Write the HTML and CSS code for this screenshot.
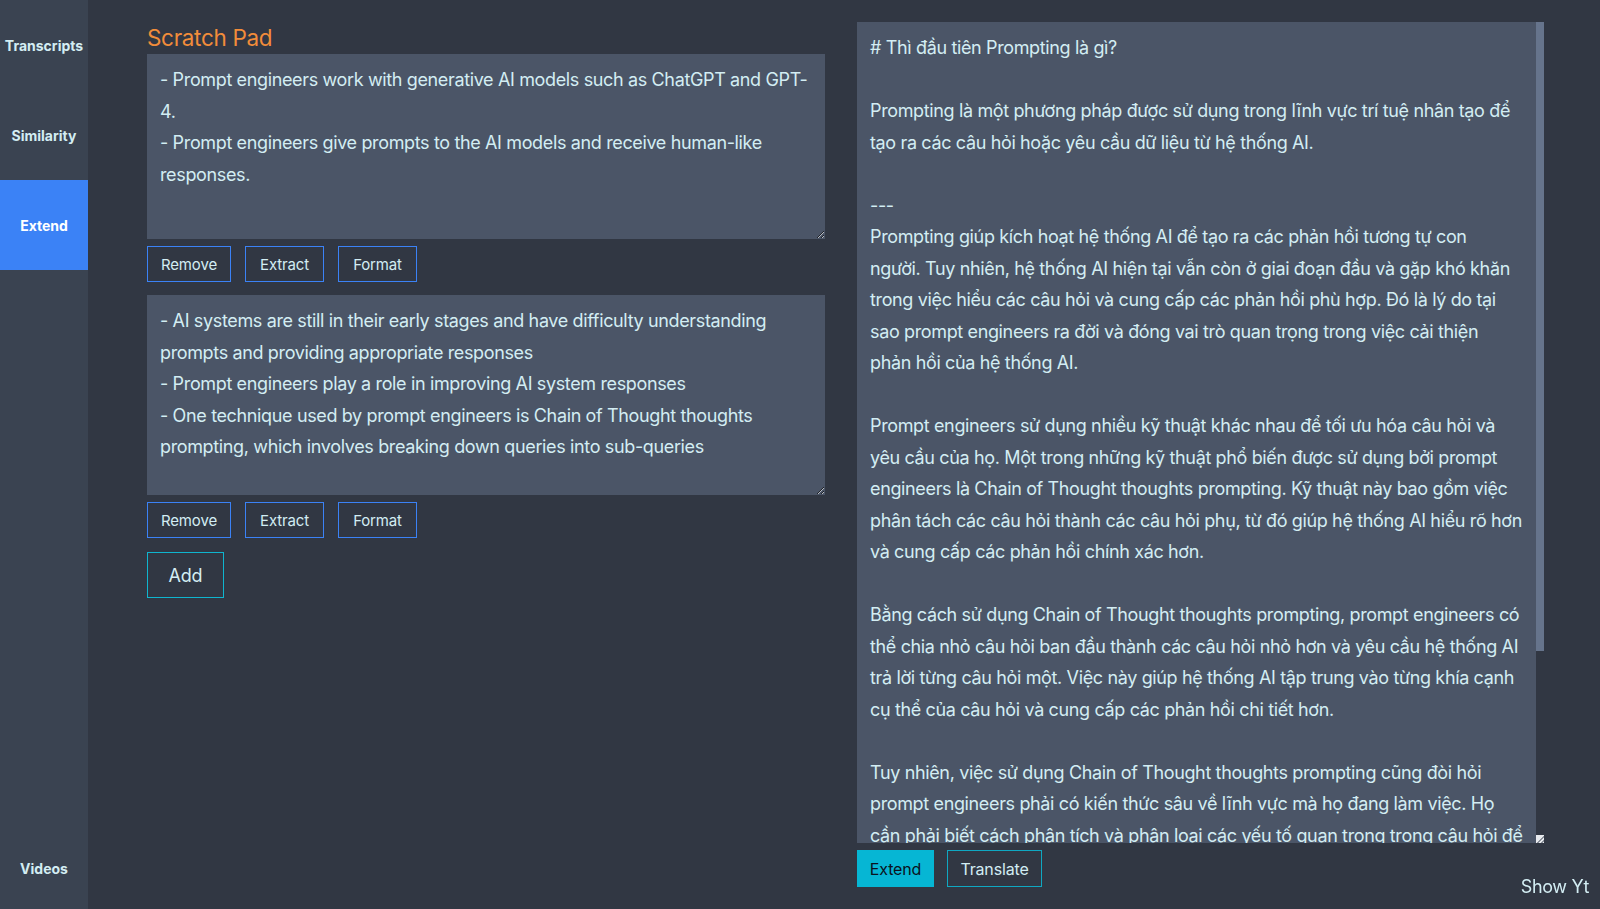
FILE: index.html
```html
<!DOCTYPE html>
<html lang="vi">
<head>
<meta charset="utf-8">
<title>Scratch Pad</title>
<link rel="stylesheet" href="styles.css">
</head>
<body>
<div class="app">
  <nav class="sidebar">
    <div class="nav-item">Transcripts</div>
    <div class="nav-item">Similarity</div>
    <div class="nav-item active">Extend</div>
    <div class="nav-spacer"></div>
    <div class="nav-item nav-bottom">Videos</div>
  </nav>
  <main class="main">
    <section class="pad">
      <h1 class="pad-title">Scratch Pad</h1>
      <textarea class="note note-1" spellcheck="false">- Prompt engineers work with generative AI models such as ChatGPT and GPT-
4.
- Prompt engineers give prompts to the AI models and receive human-like
responses.</textarea>
      <div class="btn-row">
        <button class="btn btn-remove">Remove</button>
        <button class="btn btn-extract">Extract</button>
        <button class="btn btn-format">Format</button>
      </div>
      <textarea class="note note-2" spellcheck="false">- AI systems are still in their early stages and have difficulty understanding
prompts and providing appropriate responses
- Prompt engineers play a role in improving AI system responses
- One technique used by prompt engineers is Chain of Thought thoughts
prompting, which involves breaking down queries into sub-queries</textarea>
      <div class="btn-row">
        <button class="btn btn-remove">Remove</button>
        <button class="btn btn-extract">Extract</button>
        <button class="btn btn-format">Format</button>
      </div>
      <button class="btn btn-add">Add</button>
    </section>
    <section class="output">
      <div class="result-box">
        <textarea class="result" spellcheck="false"># Thì đầu tiên Prompting là gì?

Prompting là một phương pháp được sử dụng trong lĩnh vực trí tuệ nhân tạo để
tạo ra các câu hỏi hoặc yêu cầu dữ liệu từ hệ thống AI.

---
Prompting giúp kích hoạt hệ thống AI để tạo ra các phản hồi tương tự con
người. Tuy nhiên, hệ thống AI hiện tại vẫn còn ở giai đoạn đầu và gặp khó khăn
trong việc hiểu các câu hỏi và cung cấp các phản hồi phù hợp. Đó là lý do tại
sao prompt engineers ra đời và đóng vai trò quan trọng trong việc cải thiện
phản hồi của hệ thống AI.

Prompt engineers sử dụng nhiều kỹ thuật khác nhau để tối ưu hóa câu hỏi và
yêu cầu của họ. Một trong những kỹ thuật phổ biến được sử dụng bởi prompt
engineers là Chain of Thought thoughts prompting. Kỹ thuật này bao gồm việc
phân tách các câu hỏi thành các câu hỏi phụ, từ đó giúp hệ thống AI hiểu rõ hơn
và cung cấp các phản hồi chính xác hơn.

Bằng cách sử dụng Chain of Thought thoughts prompting, prompt engineers có
thể chia nhỏ câu hỏi ban đầu thành các câu hỏi nhỏ hơn và yêu cầu hệ thống AI
trả lời từng câu hỏi một. Việc này giúp hệ thống AI tập trung vào từng khía cạnh
cụ thể của câu hỏi và cung cấp các phản hồi chi tiết hơn.

Tuy nhiên, việc sử dụng Chain of Thought thoughts prompting cũng đòi hỏi
prompt engineers phải có kiến thức sâu về lĩnh vực mà họ đang làm việc. Họ
cần phải biết cách phân tích và phân loại các yếu tố quan trọng trong câu hỏi để
đưa ra các câu hỏi phụ phù hợp. Điều này đòi hỏi sự hiểu biết sâu sắc về
cả ngôn ngữ và lĩnh vực chuyên môn.

Tóm lại, Prompting và Chain of Thought thoughts prompting là những công cụ
quan trọng giúp cải thiện khả năng phản hồi của hệ thống AI, đồng thời mở ra
nhiều cơ hội mới cho các prompt engineers trong tương lai.</textarea>
        <div class="vscroll">
          <div class="vscroll-thumb"></div>
          <div class="vscroll-track"></div>
          <div class="resizer"></div>
        </div>
      </div>
      <div class="btn-row">
        <button class="btn btn-primary">Extend</button>
        <button class="btn btn-cyan">Translate</button>
      </div>
    </section>
  </main>
  <div class="show-yt">Show Yt</div>
</div>
</body>
</html>
```

FILE: styles.css
```css
* { box-sizing: border-box; }

html, body {
  margin: 0;
  padding: 0;
  height: 100%;
}

body {
  background: #313743;
  color: #d3edf3;
  font-family: Inter, "Noto Sans", "Liberation Sans", sans-serif;
  letter-spacing: -0.02em;
  overflow: hidden;
}

.app {
  display: flex;
  height: 909px;
}

.sidebar {
  width: 88px;
  flex: none;
  background: #3a4351;
  display: flex;
  flex-direction: column;
}

.nav-item {
  height: 90px;
  display: flex;
  align-items: center;
  justify-content: center;
  font-size: 14px;
  font-weight: 700;
  letter-spacing: 0;
  color: #d3edf3;
}

.nav-item.active {
  background: #3b82f6;
  color: #ffffff;
}

.nav-spacer { flex: 1; }

.nav-bottom { height: 82px; }

.main {
  flex: 1;
  display: flex;
  padding: 22px 0 0 59px;
  gap: 32px;
}

.pad {
  width: 678px;
  flex: none;
  display: flex;
  flex-direction: column;
  align-items: flex-start;
}

.pad-title {
  margin: 0;
  font-size: 22.5px;
  line-height: 32px;
  font-weight: 400;
  color: #f28c3a;
}

.note, .result {
  display: block;
  width: 100%;
  margin: 0;
  border: none;
  outline: none;
  background: #4b5567;
  color: #d3edf3;
  font-family: inherit;
  font-size: 18px;
  letter-spacing: -0.02em;
  line-height: 31.5px;
  padding: 10px 13px;
  white-space: pre;
  overflow: hidden;
}

.note-1 { height: 185px; }
.note-2 { height: 200px; margin-top: 13px; }

.btn-row {
  display: flex;
  gap: 14px;
  margin-top: 7px;
}

.btn {
  height: 36px;
  padding: 0;
  background: transparent;
  border: 1px solid #3b82f6;
  color: #d3edf3;
  font-family: inherit;
  font-size: 15px;
  letter-spacing: -0.01em;
  cursor: pointer;
}

.btn-remove { width: 84px; }
.btn-extract { width: 79px; }
.btn-format { width: 79px; }

.btn-add {
  margin-top: 14px;
  height: 46px;
  width: 77px;
  border-color: #0fb5cf;
  font-size: 18px;
}

.output {
  width: 687px;
  flex: none;
  display: flex;
  flex-direction: column;
}

.result-box {
  display: flex;
  height: 821px;
}

.result {
  flex: 1;
  height: 100%;
  resize: none;
}

.vscroll {
  width: 8px;
  flex: none;
  display: flex;
  flex-direction: column;
}

.vscroll-thumb {
  height: 629px;
  background: #66748c;
}

.vscroll-track { flex: 1; }

.resizer {
  height: 8px;
  background:
    linear-gradient(135deg, transparent 55%, #8a909a 55%, #8a909a 65%, transparent 65%, transparent 78%, #8a909a 78%, #8a909a 88%, transparent 88%),
    #e8eaee;
}

.output .btn-row { gap: 13px; }
.output .btn-row .btn { height: 37px; }

.btn-primary {
  width: 77px;
  background: #06b6d4;
  border-color: #06b6d4;
  color: #0b1220;
  font-size: 16px;
}

.btn-cyan {
  width: 95px;
  border-color: #0fa8c2;
  font-size: 16px;
}

.show-yt {
  position: fixed;
  right: 11px;
  bottom: 12px;
  font-size: 18px;
  color: #d3edf3;
}
```
